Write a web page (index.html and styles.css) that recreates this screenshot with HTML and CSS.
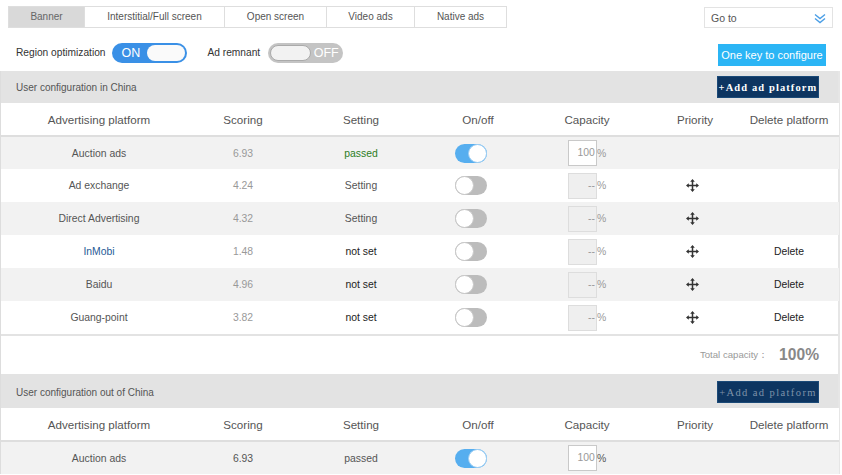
FILE: index.html
```html
<!DOCTYPE html>
<html>
<head>
<meta charset="utf-8">
<link rel="stylesheet" href="styles.css">
</head>
<body>
<div class="page">
  <div class="topbar">
    <div class="tabs">
      <div class="tab active w76">Banner</div>
      <div class="tab w140">Interstitial/Full screen</div>
      <div class="tab w102">Open screen</div>
      <div class="tab w88">Video ads</div>
      <div class="tab w92">Native ads</div>
    </div>
    <div class="goto">
      <span>Go to</span>
      <svg class="chev" width="12" height="11" viewBox="0 0 12 11"><path d="M1 1.5 L6 5.5 L11 1.5 M1 5.5 L6 9.5 L11 5.5" fill="none" stroke="#4a9ee6" stroke-width="1.4"/></svg>
    </div>
  </div>

  <div class="options">
    <div class="opt-left">
      <span class="opt-label">Region optimization</span>
      <div class="bigswitch on"><span class="bs-text">ON</span><span class="bs-knob"></span></div>
      <span class="opt-label second">Ad remnant</span>
      <div class="bigswitch off"><span class="bs-knob"></span><span class="bs-text">OFF</span></div>
    </div>
    <button class="onekey">One key to configure</button>
  </div>

  <div class="panel">
    <div class="sec-head">
      <span>User configuration in China</span>
      <button class="addbtn">+Add ad platform</button>
    </div>
    <table class="grid">
      <colgroup>
        <col style="width:196px"><col style="width:92px"><col style="width:144px"><col style="width:90px"><col style="width:128px"><col style="width:88px"><col style="width:100px">
      </colgroup>
      <thead>
        <tr><th>Advertising platform</th><th>Scoring</th><th>Setting</th><th>On/off</th><th>Capacity</th><th>Priority</th><th>Delete platform</th></tr>
      </thead>
      <tbody>
        <tr class="alt">
          <td>Auction ads</td><td class="score">6.93</td><td class="passed">passed</td>
          <td><span class="sw on"><span class="knob"></span></span></td>
          <td><span class="cap"><span class="capbox live">100</span>%</span></td>
          <td></td><td></td>
        </tr>
        <tr>
          <td>Ad exchange</td><td class="score">4.24</td><td class="setting">Setting</td>
          <td><span class="sw"><span class="knob"></span></span></td>
          <td><span class="cap"><span class="capbox">--</span>%</span></td>
          <td><svg class="move" width="13" height="13" viewBox="0 0 13 13"><path d="M6.5 1.5 V11.5 M1.5 6.5 H11.5" stroke="#333" stroke-width="1.5"/><path d="M6.5 0 L4.2 2.8 H8.8 Z M6.5 13 L4.2 10.2 H8.8 Z M0 6.5 L2.8 4.2 V8.8 Z M13 6.5 L10.2 4.2 V8.8 Z" fill="#333"/></svg></td>
          <td></td>
        </tr>
        <tr class="alt">
          <td>Direct Advertising</td><td class="score">4.32</td><td class="setting">Setting</td>
          <td><span class="sw"><span class="knob"></span></span></td>
          <td><span class="cap"><span class="capbox">--</span>%</span></td>
          <td><svg class="move" width="13" height="13" viewBox="0 0 13 13"><path d="M6.5 1.5 V11.5 M1.5 6.5 H11.5" stroke="#333" stroke-width="1.5"/><path d="M6.5 0 L4.2 2.8 H8.8 Z M6.5 13 L4.2 10.2 H8.8 Z M0 6.5 L2.8 4.2 V8.8 Z M13 6.5 L10.2 4.2 V8.8 Z" fill="#333"/></svg></td>
          <td></td>
        </tr>
        <tr>
          <td class="link">InMobi</td><td class="score">1.48</td><td class="notset">not set</td>
          <td><span class="sw"><span class="knob"></span></span></td>
          <td><span class="cap"><span class="capbox">--</span>%</span></td>
          <td><svg class="move" width="13" height="13" viewBox="0 0 13 13"><path d="M6.5 1.5 V11.5 M1.5 6.5 H11.5" stroke="#333" stroke-width="1.5"/><path d="M6.5 0 L4.2 2.8 H8.8 Z M6.5 13 L4.2 10.2 H8.8 Z M0 6.5 L2.8 4.2 V8.8 Z M13 6.5 L10.2 4.2 V8.8 Z" fill="#333"/></svg></td>
          <td class="del">Delete</td>
        </tr>
        <tr class="alt">
          <td>Baidu</td><td class="score">4.96</td><td class="notset">not set</td>
          <td><span class="sw"><span class="knob"></span></span></td>
          <td><span class="cap"><span class="capbox">--</span>%</span></td>
          <td><svg class="move" width="13" height="13" viewBox="0 0 13 13"><path d="M6.5 1.5 V11.5 M1.5 6.5 H11.5" stroke="#333" stroke-width="1.5"/><path d="M6.5 0 L4.2 2.8 H8.8 Z M6.5 13 L4.2 10.2 H8.8 Z M0 6.5 L2.8 4.2 V8.8 Z M13 6.5 L10.2 4.2 V8.8 Z" fill="#333"/></svg></td>
          <td class="del">Delete</td>
        </tr>
        <tr>
          <td>Guang-point</td><td class="score">3.82</td><td class="notset">not set</td>
          <td><span class="sw"><span class="knob"></span></span></td>
          <td><span class="cap"><span class="capbox">--</span>%</span></td>
          <td><svg class="move" width="13" height="13" viewBox="0 0 13 13"><path d="M6.5 1.5 V11.5 M1.5 6.5 H11.5" stroke="#333" stroke-width="1.5"/><path d="M6.5 0 L4.2 2.8 H8.8 Z M6.5 13 L4.2 10.2 H8.8 Z M0 6.5 L2.8 4.2 V8.8 Z M13 6.5 L10.2 4.2 V8.8 Z" fill="#333"/></svg></td>
          <td class="del">Delete</td>
        </tr>
      </tbody>
    </table>
    <div class="total">
      <span class="total-label">Total capacity：</span><span class="total-val">100%</span>
    </div>

    <div class="sec-head">
      <span>User configuration out of China</span>
      <button class="addbtn dim">+Add ad platform</button>
    </div>
    <table class="grid">
      <colgroup>
        <col style="width:196px"><col style="width:92px"><col style="width:144px"><col style="width:90px"><col style="width:128px"><col style="width:88px"><col style="width:100px">
      </colgroup>
      <thead>
        <tr><th>Advertising platform</th><th>Scoring</th><th>Setting</th><th>On/off</th><th>Capacity</th><th>Priority</th><th>Delete platform</th></tr>
      </thead>
      <tbody>
        <tr class="alt">
          <td>Auction ads</td><td class="score dark">6.93</td><td class="setting">passed</td>
          <td><span class="sw on"><span class="knob"></span></span></td>
          <td><span class="cap"><span class="capbox live">100</span><span class="pct-dark">%</span></span></td>
          <td></td><td></td>
        </tr>
      </tbody>
    </table>
  </div>
</div>
</body>
</html>
```

FILE: styles.css
```css
* { box-sizing: border-box; }
html, body { margin: 0; padding: 0; background: #fff; }
body { font-family: "Liberation Sans", Arial, sans-serif; color: #555; }
.page { width: 842px; height: 475px; overflow: hidden; }

.topbar { display: flex; justify-content: space-between; align-items: flex-start; padding: 6px 9px 0 8px; }
.tabs { display: flex; border: 1px solid #dedede; height: 22px; }
.tab { font-size: 10px; color: #555; line-height: 20px; text-align: center; border-right: 1px solid #dedede; background: #fff; }
.tab:last-child { border-right: none; }
.tab.active { background: #d9d9d9; color: #666; }
.w76 { width: 76px; } .w140 { width: 140px; } .w102 { width: 102px; } .w88 { width: 88px; } .w92 { width: 91px; }

.goto { margin-top: 1px; width: 129px; height: 21px; border: 1px solid #e3e3e3; display: flex; align-items: center; justify-content: space-between; padding: 0 6px 0 6px; font-size: 10.5px; color: #555; }
.chev { margin-top: 1px; }

.options { display: flex; justify-content: space-between; align-items: center; padding: 0 16px 0 16px; height: 43px; }
.opt-left { display: flex; align-items: center; margin-top: 6px; }
.opt-label { font-size: 10.2px; color: #333; margin-right: 7px; }
.opt-label.second { margin-left: 20px; margin-right: 8px; }
.bigswitch { width: 75px; height: 20px; border-radius: 10px; display: flex; align-items: center; padding: 2px; font-size: 12.5px; color: #fff; }
.bigswitch.on { background: #3a90e6; }
.bigswitch.off { background: #c4c4c4; }
.bs-text { width: 30px; text-align: center; line-height: 16px; }
.bigswitch.on .bs-text { width: 33px; }
.bs-knob { flex: 1; height: 16px; border-radius: 8px; background: #fafafa; }
.bigswitch.off .bs-knob { border: 1px solid #aaa; background: #f2f2f2; }
.onekey { margin-top: 11px; height: 22px; width: 108px; border: none; background: #2bb5f5; color: #fff; font-family: inherit; font-size: 11px; padding: 0; margin-right: 0; white-space: nowrap; }

.panel { width: 840px; border-left: 1px solid #ddd; border-right: 2px solid #e6e6e6; }
.sec-head { height: 32px; background: #e3e3e3; display: flex; align-items: center; justify-content: space-between; padding: 0 19px 0 15px; font-size: 10px; color: #555; }
.addbtn { height: 22px; width: 102px; background: #0d3561; color: #fff; border: 1px solid #1b4a78; font-family: "Liberation Serif", "Times New Roman", serif; font-size: 10.5px; font-weight: bold; letter-spacing: 1.1px; padding: 0; white-space: nowrap; }
.addbtn.dim { color: #7f93a9; font-weight: normal; letter-spacing: 1.4px; }

.grid { width: 838px; border-collapse: collapse; table-layout: fixed; }
.grid th { height: 33px; font-size: 11.6px; font-weight: normal; color: #555; border-bottom: 2px solid #dedede; background: #fff; padding: 0; }
.grid td { height: 33px; font-size: 10.4px; color: #555; text-align: center; padding: 0; vertical-align: middle; }
.grid tr.alt td { background: #f2f2f2; }
.grid td.score { color: #999; }
.grid td.score.dark { color: #555; }
.grid td.passed { color: #2d7d1e; }
.grid td.setting { color: #555; }
.grid td.notset { color: #222; }
.grid td.link { color: #1f5a96; }
.grid td.del { color: #222; }

.sw { display: inline-block; width: 32px; height: 19px; border-radius: 10px; background: #bcbcbc; position: relative; vertical-align: middle; margin-left: -14px; }
.sw .knob { position: absolute; left: 0; top: 0; width: 19px; height: 19px; border-radius: 50%; background: #fff; border: 1px solid #c8c8c8; }
.sw.on { background: #56aeef; }
.sw.on .knob { left: auto; right: 0; border-color: #9ccdf3; }

.cap { display: inline-flex; align-items: center; color: #999; font-size: 10.4px; }
.capbox { width: 29px; height: 26px; border: 1px solid #ddd; background: #efefef; text-align: right; line-height: 24px; color: #999; padding-right: 1px; }
.capbox.live { background: #fff; border-color: #c9c9c9; }
.pct-dark { color: #555; }

.move { vertical-align: middle; margin-right: 6px; }

.total { height: 42px; border-top: 2px solid #e3e3e3; border-bottom: 2px solid #e3e3e3; display: flex; align-items: center; justify-content: flex-end; padding-right: 19px; }
.total-label { font-size: 9.6px; color: #999; margin-right: 11px; }
.total-val { font-size: 15.6px; font-weight: bold; color: #888; }
```
